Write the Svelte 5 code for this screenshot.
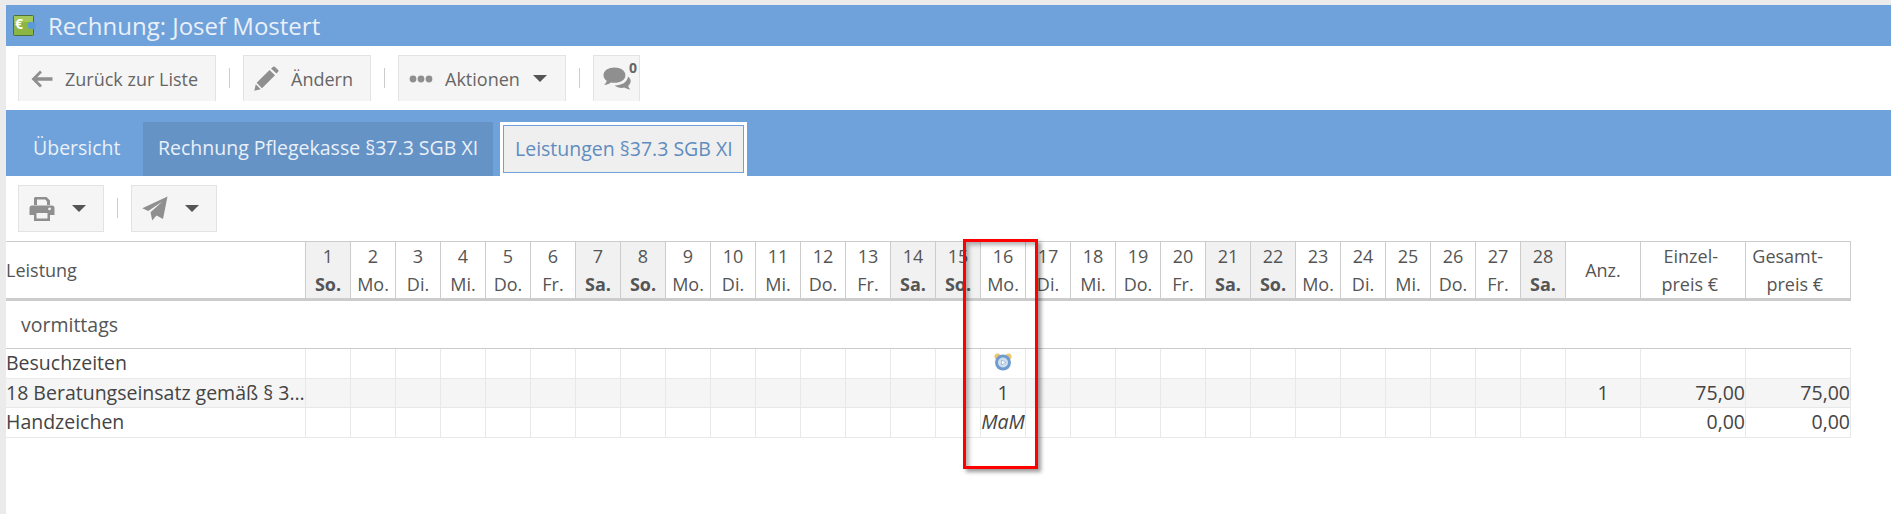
<script>
  const names = ["So.", "Mo.", "Di.", "Mi.", "Do.", "Fr.", "Sa."];
  const days = Array.from({ length: 28 }, (_, i) => ({
    num: i + 1,
    name: names[(i) % 7],
    weekend: i % 7 === 0 || i % 7 === 6,
  }));
  const marked = 16;
</script>

<div class="page">
  <header class="title">
    <svg class="logo" width="23" height="21" viewBox="0 0 23 21">
      <rect x="0.5" y="0.5" width="20" height="20" rx="1" fill="#8cb544" stroke="#4f6f3a" />
      <rect x="1" y="1" width="19" height="6" fill="#a3c85a" />
      <rect x="15" y="7" width="7.5" height="7" rx="2" fill="#5b9bd5" />
    </svg>
    <span class="logo-euro">€</span>
    <h1>Rechnung: Josef Mostert</h1>
  </header>

  <div class="toolbar">
    <button class="btn back">
      <svg width="22" height="18" viewBox="0 0 22 18"><path d="M9 0.5 11 2.6 6.2 7.2H21.5V10.8H6.2L11 15.4 9 17.5 0.5 9Z" fill="#8f8f8f" /></svg>
      Zurück zur Liste
    </button>
    <i class="sep"></i>
    <button class="btn edit">
      <svg width="25" height="25" viewBox="0 0 25 25"><path d="M17 2.5 19.2 0.7Q20 0.1 20.8 0.7L24.2 4.1Q24.9 4.9 24.2 5.7L22.4 7.6ZM15.6 3.9 21 9.3 8 22.2 2.6 16.8ZM1.8 18.2 6.7 23.2 0.3 24.7Z" fill="#8f8f8f" /></svg>
      Ändern
    </button>
    <i class="sep"></i>
    <button class="btn actions">
      <svg width="24" height="8" viewBox="0 0 24 8"><circle cx="4" cy="4" r="3.4" fill="#8f8f8f" /><circle cx="12" cy="4" r="3.4" fill="#8f8f8f" /><circle cx="20" cy="4" r="3.4" fill="#8f8f8f" /></svg>
      Aktionen
      <b class="caret"></b>
    </button>
    <i class="sep"></i>
    <button class="btn chat">
      <svg width="28" height="24" viewBox="0 0 28 24">
        <path d="M25 9.5C27 11 28 12.8 27.6 15 27.2 17 26 18.3 25.2 19 25.5 20.5 26.5 21.6 27.4 22.6 25 22.4 23 21.6 21.4 20.6 18 21.4 14 20.6 11.5 18.4 18 18.6 24.5 15.5 25 9.5Z" fill="#8f8f8f" />
        <path d="M11.5 0.5C17.5 0.5 22.4 3.6 22.4 8.2S17.5 15.8 11.5 15.8C10.2 15.8 9 15.7 7.9 15.4 6.3 16.8 3.5 17.8 1 17.9 2.4 16.6 3.5 15.2 3.7 13.7 1.6 12.4 0.5 10.4 0.5 8.2 0.5 3.6 5.5 0.5 11.5 0.5Z" fill="#8f8f8f" />
      </svg>
      <span class="count">0</span>
    </button>
  </div>

  <nav class="tabs">
    <a class="tab plain">Übersicht</a>
    <a class="tab dark">Rechnung Pflegekasse §37.3 SGB XI</a>
    <a class="tab current"><span>Leistungen §37.3 SGB XI</span></a>
  </nav>

  <div class="toolbar small">
    <button class="btn icon">
      <svg width="26" height="24" viewBox="0 0 26 24"><path d="M6 0H17.5L21 3.5V8H18V4.5L16 2.5H8V8H5V1ZM3 8.5H23Q25.5 8.5 25.5 11V18H21V24H5V18H0.5V11Q0.5 8.5 3 8.5ZM7.5 16V21.5H18.5V16ZM20.5 10.5A1.4 1.4 0 1 0 20.6 13.3 1.4 1.4 0 1 0 20.5 10.5Z" fill="#8f8f8f" fill-rule="evenodd" /></svg>
      <b class="caret"></b>
    </button>
    <i class="sep"></i>
    <button class="btn icon">
      <svg width="26" height="25" viewBox="0 0 26 25"><path d="M25.5 0.5 21 23 14.5 19.6 10.2 24.6 8.5 16.3 20.5 5.5 6.2 15 0.3 12.3Z" fill="#8f8f8f" /></svg>
      <b class="caret"></b>
    </button>
  </div>

  <div class="grid">
    <table>
      <colgroup>
        <col class="c-name" />
        {#each days as d}<col class="c-day" />{/each}
        <col class="c-anz" />
        <col class="c-price" />
        <col class="c-price" />
      </colgroup>
      <thead>
        <tr>
          <th class="name">Leistung</th>
          {#each days as d}
            <th class:weekend={d.weekend}>{d.num}<br /><span>{d.name}</span></th>
          {/each}
          <th>Anz.</th>
          <th class="price">Einzel-<br />preis €</th>
          <th class="price">Gesamt-<br />preis €</th>
        </tr>
      </thead>
      <tbody>
        <tr class="group"><td colspan="32">vormittags</td></tr>
        <tr class="raised">
          <td class="name">Besuchzeiten</td>
          {#each days as d}
            <td>
              {#if d.num === marked}
                <svg class="clock" width="18" height="18" viewBox="0 0 18 18">
                  <circle cx="3.5" cy="3.5" r="3" fill="#edc66e" />
                  <circle cx="14.5" cy="3.5" r="3" fill="#edc66e" />
                  <circle cx="9" cy="9.5" r="8" fill="#6f9ccf" />
                  <circle cx="9" cy="9.5" r="5" fill="#cfdff0" />
                  <path d="M7.5 7 12 9.5 7.5 12Z" fill="#fff" stroke="#7fa3cf" stroke-width="0.6" />
                </svg>
              {/if}
            </td>
          {/each}
          <td></td><td></td><td></td>
        </tr>
        <tr class="shade">
          <td class="name">18 Beratungseinsatz gemäß § 3…</td>
          {#each days as d}<td>{d.num === marked ? "1" : ""}</td>{/each}
          <td>1</td>
          <td class="num">75,00</td>
          <td class="num">75,00</td>
        </tr>
        <tr class="raised">
          <td class="name">Handzeichen</td>
          {#each days as d}<td class="sign">{d.num === marked ? "MaM" : ""}</td>{/each}
          <td></td>
          <td class="num">0,00</td>
          <td class="num">0,00</td>
        </tr>
      </tbody>
    </table>
    <div class="marker"></div>
  </div>
</div>

<style>
  :global(body) {
    background: #ebebeb;
    font-family: "Open Sans", sans-serif;
  }

  .page {
    margin: 5px 0 0 6px;
    height: 509px;
    background: #fff;
    overflow: hidden;
  }

  .title {
    position: relative;
    display: flex;
    align-items: center;
    height: 41px;
    padding-left: 7px;
    background: #6fa1da;
  }

  .logo {
    margin-top: -1px;
  }

  .logo-euro {
    position: absolute;
    left: 9px;
    top: 10px;
    color: #fff;
    font: bold 14px/18px "Open Sans", sans-serif;
  }

  h1 {
    margin: 0 0 0 12px;
    color: #e9f0f9;
    font-size: 24px;
    font-weight: 400;
  }

  .toolbar {
    display: flex;
    align-items: flex-start;
    height: 64px;
    padding: 9px 0 0 12px;
    box-sizing: border-box;
  }

  .toolbar.small {
    height: 65px;
  }

  .sep {
    width: 1px;
    height: 20px;
    margin: 13px 13px 0;
    background: #ccc;
  }

  .btn {
    display: flex;
    align-items: center;
    height: 46px;
    padding: 0;
    border: 1px solid #e3e3e3;
    border-bottom: 0;
    background: #f5f5f5;
    color: #666;
    font: 400 18px "Open Sans", sans-serif;
    box-sizing: border-box;
  }

  .back { width: 198px; padding-left: 12px; gap: 12px; }
  .edit { width: 128px; padding-left: 10px; gap: 12px; }
  .actions { width: 168px; padding-left: 10px; gap: 12px; }
  .chat { position: relative; width: 47px; padding-left: 9px; align-items: flex-start; padding-top: 11px; }

  .count {
    position: absolute;
    top: 5px;
    right: 2px;
    font-size: 14px;
    font-weight: 700;
    line-height: 14px;
  }

  .caret {
    width: 0;
    height: 0;
    margin-left: 1px;
    border: 7px solid transparent;
    border-top-color: #555;
    border-bottom: 0;
  }

  .tabs {
    display: flex;
    align-items: flex-end;
    height: 66px;
    background: #6fa1da;
    font-size: 19.5px;
  }

  .tab {
    height: 54px;
    line-height: 52px;
    box-sizing: border-box;
    white-space: nowrap;
  }

  .plain {
    width: 137px;
    padding-left: 27px;
    color: #e9f0f9;
  }

  .dark {
    width: 350px;
    padding-left: 15px;
    background: #6593c6;
    color: #e9f0f9;
  }

  .current {
    width: 247px;
    margin-left: 7px;
    padding: 3px 3px 0;
    background: #fff;
  }

  .current span {
    display: block;
    height: 48px;
    padding: 0 11px;
    border: 1px solid #6fa1da;
    background: #efefef;
    color: #5f8cbf;
    line-height: 46px;
    box-sizing: border-box;
  }

  .toolbar.small .btn {
    border-bottom: 1px solid #e3e3e3;
    height: 47px;
  }

  .icon {
    width: 86px;
    padding-left: 10px;
    gap: 16px;
  }

  .grid {
    position: relative;
  }

  table {
    width: 1845px;
    table-layout: fixed;
    border-collapse: separate;
    border-spacing: 0;
    color: #444;
    font-size: 19.5px;
  }

  .c-name { width: 300px; }
  .c-day { width: 45px; }
  .c-anz { width: 75px; }
  .c-price { width: 105px; }

  th {
    height: 56px;
    padding: 0;
    border-top: 1px solid #ccc;
    border-bottom: 3px solid #ccc;
    border-right: 1px solid #ccc;
    box-sizing: content-box;
    color: #555;
    font-size: 18px;
    font-weight: 400;
    line-height: 28px;
    text-align: center;
    white-space: nowrap;
    overflow: hidden;
  }

  th.name {
    text-align: left;
  }

  th.price {
    padding-right: 27px;
    text-align: right;
  }

  th.weekend {
    background: #f1f1f1;
  }

  th.weekend span {
    font-weight: 700;
  }

  td {
    height: 29px;
    padding: 0;
    border-right: 1px solid #e8e8e8;
    border-bottom: 1px solid #e8e8e8;
    line-height: 26px;
    text-align: center;
    white-space: nowrap;
    overflow: hidden;
  }

  .raised td {
    height: 27px;
    padding-bottom: 2px;
  }

  td.name {
    text-align: left;
  }

  td.num {
    text-align: right;
  }

  td.sign {
    font-style: italic;
  }

  .shade td {
    height: 28px;
    background: #f5f5f5;
  }

  .group td {
    height: 47px;
    padding-left: 15px;
    border-right: 0;
    border-bottom: 1px solid #ccc;
    color: #555;
    text-align: left;
  }

  .clock {
    display: block;
    margin: -2px auto 0;
  }

  .marker {
    position: absolute;
    left: 957px;
    top: -2px;
    width: 75px;
    height: 230px;
    border: 3px solid #f00;
    box-sizing: border-box;
    box-shadow: 3px 3px 4px rgba(0, 0, 0, 0.4), inset 3px 3px 4px rgba(0, 0, 0, 0.3);
  }
</style>
